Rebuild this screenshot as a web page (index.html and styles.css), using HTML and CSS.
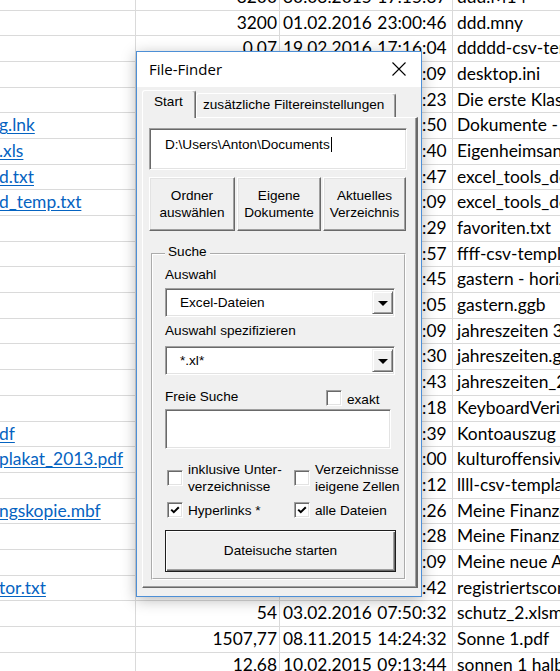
FILE: index.html
```html
<!DOCTYPE html>
<html>
<head>
<meta charset="utf-8">
<link rel="stylesheet" href="styles.css">
</head>
<body>
<div class="sheet">
  <div class="row"><div class="ca"></div><div class="cb">3200</div><div class="cd">30.03.2015 17:15:37</div><div class="ce">ddd.M14</div></div>
  <div class="row"><div class="ca"></div><div class="cb">3200</div><div class="cd">01.02.2016 23:00:46</div><div class="ce">ddd.mny</div></div>
  <div class="row"><div class="ca"></div><div class="cb">0,07</div><div class="cd">19.02.2016 17:16:04</div><div class="ce">ddddd-csv-template.csv</div></div>
  <div class="row"><div class="ca"></div><div class="cb">0,28</div><div class="cd">18.01.2016 20:14:09</div><div class="ce">desktop.ini</div></div>
  <div class="row"><div class="ca"></div><div class="cb">24</div><div class="cd">12.12.2015 10:31:23</div><div class="ce">Die erste Klasse.docx</div></div>
  <div class="row"><div class="ca"><span class="link">g.lnk</span></div><div class="cb">1,23</div><div class="cd">05.01.2016 08:44:50</div><div class="ce">Dokumente - Verknüpfung.lnk</div></div>
  <div class="row"><div class="ca"><span class="link">.xls</span></div><div class="cb">57</div><div class="cd">21.11.2015 16:02:40</div><div class="ce">Eigenheimsanierung.xls</div></div>
  <div class="row"><div class="ca"><span class="link">d.txt</span></div><div class="cb">3,1</div><div class="cd">14.02.2016 11:27:47</div><div class="ce">excel_tools_download.txt</div></div>
  <div class="row"><div class="ca"><span class="link">d_temp.txt</span></div><div class="cb">3,1</div><div class="cd">14.02.2016 11:28:09</div><div class="ce">excel_tools_download_temp.txt</div></div>
  <div class="row"><div class="ca"></div><div class="cb">0,45</div><div class="cd">02.02.2016 19:13:29</div><div class="ce">favoriten.txt</div></div>
  <div class="row"><div class="ca"></div><div class="cb">0,07</div><div class="cd">19.02.2016 17:18:57</div><div class="ce">ffff-csv-template.csv</div></div>
  <div class="row"><div class="ca"></div><div class="cb">16,4</div><div class="cd">09.01.2016 14:55:45</div><div class="ce">gastern - horizontal.ggb</div></div>
  <div class="row"><div class="ca"></div><div class="cb">15,9</div><div class="cd">09.01.2016 14:20:05</div><div class="ce">gastern.ggb</div></div>
  <div class="row"><div class="ca"></div><div class="cb">22,1</div><div class="cd">11.01.2016 09:36:09</div><div class="ce">jahreszeiten 3.ggb</div></div>
  <div class="row"><div class="ca"></div><div class="cb">21,7</div><div class="cd">10.01.2016 18:42:30</div><div class="ce">jahreszeiten.ggb</div></div>
  <div class="row"><div class="ca"></div><div class="cb">21,9</div><div class="cd">10.01.2016 19:05:43</div><div class="ce">jahreszeiten_2.ggb</div></div>
  <div class="row"><div class="ca"></div><div class="cb">88</div><div class="cd">28.10.2015 07:59:18</div><div class="ce">KeyboardVerifier.exe</div></div>
  <div class="row"><div class="ca"><span class="link">df</span></div><div class="cb">112</div><div class="cd">30.12.2015 12:10:39</div><div class="ce">Kontoauszug 2015.pdf</div></div>
  <div class="row"><div class="ca"><span class="link">plakat_2013.pdf</span></div><div class="cb">845</div><div class="cd">17.06.2015 15:47:00</div><div class="ce">kulturoffensive.pdf</div></div>
  <div class="row"><div class="ca"></div><div class="cb">0,07</div><div class="cd">19.02.2016 17:20:12</div><div class="ce">llll-csv-template.csv</div></div>
  <div class="row"><div class="ca"><span class="link">ngskopie.mbf</span></div><div class="cb">260</div><div class="cd">01.02.2016 22:58:26</div><div class="ce">Meine Finanzen.mbf</div></div>
  <div class="row"><div class="ca"></div><div class="cb">259</div><div class="cd">01.02.2016 22:59:28</div><div class="ce">Meine Finanzen - Sicherungskopie.mbf</div></div>
  <div class="row"><div class="ca"></div><div class="cb">36</div><div class="cd">07.02.2016 13:21:09</div><div class="ce">Meine neue Anwendung.xlsm</div></div>
  <div class="row"><div class="ca"><span class="link">tor.txt</span></div><div class="cb">0,17</div><div class="cd">23.01.2016 10:06:42</div><div class="ce">registriertscomputer.txt</div></div>
  <div class="row"><div class="ca"></div><div class="cb">54</div><div class="cd">03.02.2016 07:50:32</div><div class="ce">schutz_2.xlsm</div></div>
  <div class="row"><div class="ca"></div><div class="cb">1507,77</div><div class="cd">08.11.2015 14:24:32</div><div class="ce">Sonne 1.pdf</div></div>
  <div class="row"><div class="ca"></div><div class="cb">12,68</div><div class="cd">10.02.2015 09:13:44</div><div class="ce">sonnen 1 halb.pdf</div></div>
</div>

<div class="dialog">
  <div class="titlebar">
    <span class="title">File-Finder</span>
    <svg class="close" width="14" height="14" viewBox="0 0 14 14"><path d="M0.5 0.5 L13.5 13.5 M13.5 0.5 L0.5 13.5" stroke="#000" stroke-width="1.1" fill="none"/></svg>
  </div>
  <div class="client">
    <div class="tabs">
      <div class="tab tab-active">Start</div>
      <div class="tab tab-second">zusätzliche Filtereinstellungen</div>
    </div>
    <div class="page">
      <div class="sunken path"><span>D:\Users\Anton\Documents</span><span class="caret"></span></div>
      <div class="btnrow">
        <div class="raised btn3 w1">Ordner<br>auswählen</div>
        <div class="raised btn3 w2">Eigene<br>Dokumente</div>
        <div class="raised btn3 w3">Aktuelles<br>Verzeichnis</div>
      </div>
      <fieldset class="frame">
        <legend>Suche</legend>
        <div class="lbl first">Auswahl</div>
        <div class="sunken combo"><span>Excel-Dateien</span><span class="drop"><svg width="10" height="5" viewBox="0 0 10 5"><polygon points="0,0 10,0 5,5" fill="#000"/></svg></span></div>
        <div class="lbl second">Auswahl spezifizieren</div>
        <div class="sunken combo combo2"><span>*.xl*</span><span class="drop"><svg width="10" height="5" viewBox="0 0 10 5"><polygon points="0,0 10,0 5,5" fill="#000"/></svg></span></div>
        <div class="freirow">
          <span class="freelbl">Freie Suche</span>
          <span class="sunken box exakt-box"></span>
          <span class="exakt-lbl">exakt</span>
        </div>
        <div class="sunken freebox"></div>
        <div class="checks">
          <div class="chk"><span class="sunken box"></span><span class="chklbl">inklusive Unter-<br>verzeichnisse</span></div>
          <div class="chk"><span class="sunken box"></span><span class="chklbl">Verzeichnisse<br>ieigene Zellen</span></div>
          <div class="chk"><span class="sunken box"><svg width="10" height="10" viewBox="0 0 10 10"><polyline points="1.2,4.6 3.8,7.2 8.8,2.2" stroke="#000" stroke-width="2" fill="none"/></svg></span><span class="chklbl">Hyperlinks *</span></div>
          <div class="chk"><span class="sunken box"><svg width="10" height="10" viewBox="0 0 10 10"><polyline points="1.2,4.6 3.8,7.2 8.8,2.2" stroke="#000" stroke-width="2" fill="none"/></svg></span><span class="chklbl">alle Dateien</span></div>
        </div>
        <div class="defbtn">Dateisuche starten</div>
      </fieldset>
    </div>
  </div>
</div>
</body>
</html>
```

FILE: styles.css
```css
* { box-sizing: border-box; }
html, body { margin: 0; padding: 0; }
body {
  width: 560px;
  height: 671px;
  overflow: hidden;
  background: #fff;
  position: relative;
  font-family: Lato, "Open Sans", sans-serif;
}

/* spreadsheet */
.sheet { margin-top: -15.2px; font-size: 17.4px; color: #000; }
.row {
  display: flex;
  height: 25.69px;
  border-bottom: 1px solid #dadada;
  line-height: 24.69px;
  white-space: nowrap;
}
.ca { width: 136px; flex: none; border-right: 1px solid #dadada; overflow: hidden; text-indent: -1px; }
.cb { width: 144px; flex: none; border-right: 1px solid #dadada; text-align: right; padding-right: 2px; overflow: hidden; }
.cd { width: 173px; flex: none; border-right: 1px solid #dadada; padding-left: 3px; overflow: hidden; word-spacing: 1px; }
.ce { flex: 1; min-width: 0; padding-left: 4px; overflow: hidden; }
.link { color: #0563c1; text-decoration: underline; text-underline-offset: 2px; }

/* dialog */
.dialog {
  position: absolute;
  left: 136px;
  top: 51px;
  width: 286px;
  height: 546px;
  border: 1px solid #4d8fd6;
  background: #f0f0f0;
  box-shadow: 0 3px 14px rgba(0, 0, 0, 0.28);
  font-family: "Liberation Sans", Arial, sans-serif;
  font-size: 13.6px;
  color: #000;
  display: flex;
  flex-direction: column;
}
.titlebar {
  height: 35px;
  flex: none;
  background: #fff;
  display: flex;
  align-items: center;
  padding: 0 15px 2px 12px;
}
.title { font-family: "Open Sans", sans-serif; font-size: 15px; line-height: 20px; }
.close { margin-left: auto; display: block; }

.client { padding: 3px 2px 0 5px; }

.tabs { display: flex; height: 27px; align-items: flex-start; }
.tab {
  border-top: 1px solid #fff;
  border-left: 1px solid #fff;
  border-right: 1px solid #696969;
  box-shadow: inset -1px 0 0 #a0a0a0;
  border-radius: 3px 3px 0 0;
  line-height: 16px;
  white-space: nowrap;
  background: #f0f0f0;
}
.tab-active {
  width: 54px;
  height: 28px;
  padding: 3px 0 0 11px;
  position: relative;
  z-index: 1;
}
.tab-second {
  width: 200px;
  height: 24px;
  margin-top: 3px;
  padding: 3px 0 0 6px;
}

.page {
  width: 276px;
  border-top: 1px solid #fff;
  border-left: 1px solid #fff;
  border-right: 2px solid #696969;
  border-bottom: 1px solid #696969;
  box-shadow: inset -1px -1px 0 #a0a0a0;
  padding: 10px 0 7px 6px;
}

.sunken {
  background: #fff;
  border: 1px solid;
  border-color: #a0a0a0 #fff #fff #a0a0a0;
  box-shadow: inset 1px 1px 0 #696969, inset -1px -1px 0 #e3e3e3;
}
.raised {
  background: #f0f0f0;
  border: 1px solid;
  border-color: #fff #696969 #696969 #fff;
  box-shadow: inset -1px -1px 0 #a0a0a0, inset 1px 1px 0 #e3e3e3;
}

.path {
  width: 258px;
  height: 42px;
  padding: 7.7px 0 0 15px;
  line-height: 16px;
  white-space: nowrap;
  display: flex;
  align-items: flex-start;
}
.caret {
  display: block;
  width: 1px;
  height: 15px;
  background: #000;
  margin-top: 0.5px;
  margin-left: 1px;
}

.btnrow { display: flex; gap: 2px; margin-top: 7px; height: 54px; }
.btn3 {
  display: flex;
  align-items: center;
  justify-content: center;
  text-align: center;
  line-height: 16.5px;
  padding-top: 1px;
}
.w1 { width: 86px; }
.w2 { width: 84px; }
.w3 { width: 83px; }

.frame {
  margin: 13px 0 0 2px;
  width: 255px;
  min-width: 0;
  border: 2px groove #fff;
  padding: 3px 0 6px 12px;
}
.frame legend {
  padding: 0 3px 4px 3px;
  line-height: 16px;
}
.lbl { line-height: 16px; }
.lbl.second { margin-top: 6px; }

.combo {
  width: 230px;
  height: 29px;
  margin-top: 5px;
  display: flex;
  align-items: center;
  padding-left: 14px;
  line-height: 16px;
}
.combo2 { margin-top: 7px; }
.drop {
  margin-left: auto;
  margin-right: 1px;
  width: 21px;
  height: 23px;
  display: flex;
  align-items: center;
  justify-content: center;
  background: #f0f0f0;
  border: 1px solid;
  border-color: #f0f0f0 #696969 #696969 #f0f0f0;
  box-shadow: inset 1px 1px 0 #fff, inset -1px -1px 0 #a0a0a0;
  padding-top: 1px;
}
.drop svg { display: block; }

.freirow { display: flex; align-items: flex-start; width: 226px; height: 17px; margin-top: 14px; }
.freelbl { width: 161px; flex: none; line-height: 16px; }
.box {
  width: 16px;
  height: 16px;
  flex: none;
  display: flex;
  align-items: center;
  justify-content: center;
}
.box svg { display: block; }
.exakt-box { margin-top: 1px; }
.exakt-lbl { margin-left: 5px; padding-top: 3.3px; line-height: 16px; }

.freebox { width: 226px; height: 40px; margin-top: 3px; }

.checks {
  display: grid;
  grid-template-columns: 127px 1fr;
  row-gap: 7px;
  margin-top: 11.5px;
}
.chk { display: flex; align-items: center; padding-left: 2px; }
.chklbl { margin-left: 5px; line-height: 17px; white-space: nowrap; }

.defbtn {
  width: 231px;
  height: 42px;
  margin-top: 11.5px;
  display: flex;
  align-items: center;
  justify-content: center;
  background: #f0f0f0;
  border: 1px solid #1e1e1e;
  box-shadow: inset 1px 1px 0 #fff, inset -1px -1px 0 #696969, inset -2px -2px 0 #a0a0a0;
  line-height: 16px;
}
```
